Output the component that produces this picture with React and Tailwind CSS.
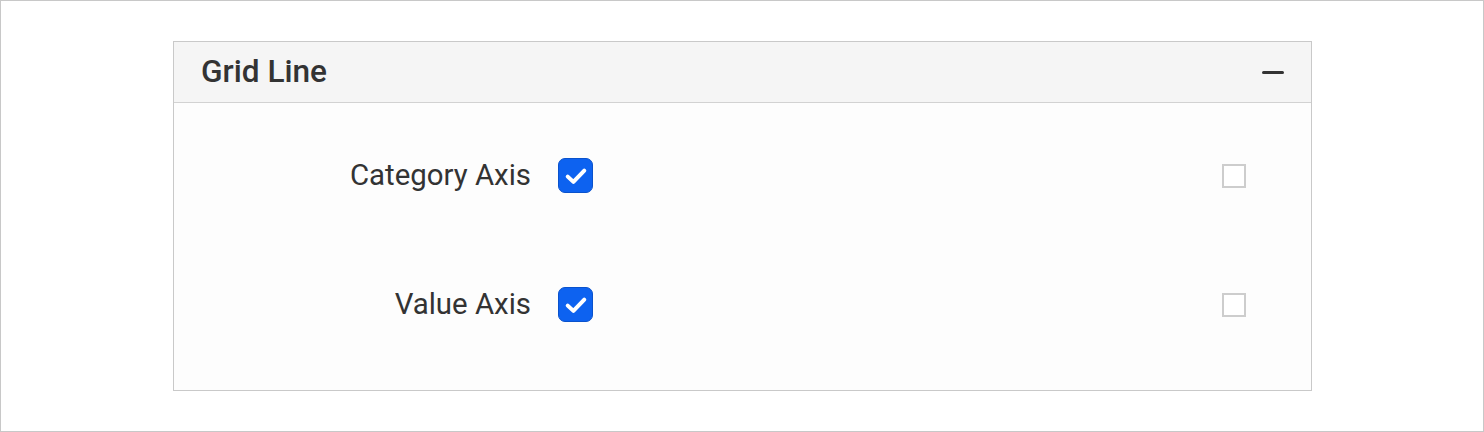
const rows = ['Category Axis', 'Value Axis']

function BlueCheck() {
  return (
    <span className="w-[35px] h-[35px] rounded-[7px] bg-[#0d62f0] border border-[#0a52cc] flex items-center justify-center">
      <svg width="26" height="26" viewBox="0 0 22 22" fill="none">
        <path d="M4 11.5 L8.8 16 L18 6.5" stroke="white" strokeWidth="3.4" strokeLinecap="round" strokeLinejoin="round" />
      </svg>
    </span>
  )
}

export default function App() {
  return (
    <div
      className="w-[1484px] h-[432px] border border-[#c8c8c8] bg-white pl-[172px] pt-[40px]"
      style={{ fontFamily: 'Roboto, "Liberation Sans", sans-serif' }}
    >
      <div className="w-[1139px] h-[350px] border border-[#c9c9c9] bg-[#fdfdfd] flex flex-col">
        {/* Header */}
        <div className="h-[61px] bg-[#f5f5f5] border-b border-[#d2d2d2] flex items-center justify-between pl-[27px] pr-[27px]">
          <h2 className="text-[#333] text-[31.6px] font-medium leading-none">Grid Line</h2>
          <span className="w-[22px] h-[3px] bg-[#333] rounded-full" />
        </div>

        {/* Body */}
        <div className="flex-1 pt-[8px]">
          {rows.map((label) => (
            <div key={label} className="h-[129px] flex items-center">
              <span className="w-[357px] text-right text-[29.4px] text-[#333] leading-none">{label}</span>
              <span className="ml-[27px]">
                <BlueCheck />
              </span>
              <span className="flex-1" />
              <span className="w-[24px] h-[24px] border-2 border-[#cdcdcd] bg-white mr-[65px]" />
            </div>
          ))}
        </div>
      </div>
    </div>
  )
}
